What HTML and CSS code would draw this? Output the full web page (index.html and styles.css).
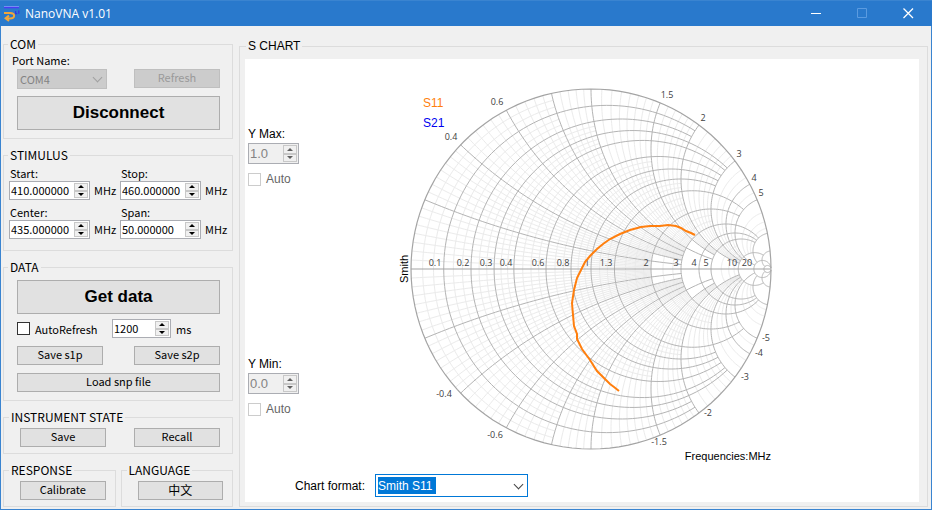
FILE: index.html
```html
<!DOCTYPE html>
<html lang="en">
<head>
  <meta charset="UTF-8" />
  <meta name="viewport" content="width=device-width, initial-scale=1.0"/>
  <title>NanoVNA v1.01</title>
  <link rel="stylesheet" href="styles.css">
</head>
<body>

  <header class="titlebar">
    <svg class="app-icon" width="17" height="16" viewBox="0 0 17 16" fill="none">
      <path d="M0 1.5H15" stroke="#4a3cf0" stroke-width="1.6"/>
      <path d="M0 .5H15" stroke="#8fa0ff" stroke-width=".7"/>
      <path d="M0 7H6C11.500 7 11.500 12.300 6 12.400L2 12.200M5 9.600L1.600 12.300L5 15" stroke="#f0a63c" stroke-width="2"/>
      <path d="M11.600 5V7.600H13.200M14.800 4.600V7.800" stroke="#3a2fe0" stroke-width="1.2"/>
    </svg>
    <h1>NanoVNA v1.01</h1>
    <div class="win-buttons">
      <button type="button" aria-label="Minimize"><svg width="11" height="11" viewBox="0 0 11 11"><path d="M0 5.5H10" stroke="#fff"/></svg></button>
      <button type="button" aria-label="Maximize" disabled><svg width="11" height="11" viewBox="0 0 11 11"><path d="M.5 .5H9.500V9.500H.5Z" fill="none" stroke="#5b9be0"/></svg></button>
      <button type="button" aria-label="Close"><svg width="11" height="11" viewBox="0 0 11 11"><path d="M.5 .5L10 10M10 .5L.5 10" stroke="#fff" stroke-width="1.3"/></svg></button>
    </div>
  </header>

  <main class="window">
    <div class="sidebar">

      <fieldset class="group com">
        <legend>COM</legend>
        <label class="caption" for="port">Port Name:</label>
        <div class="row">
          <div class="combo port"><select id="port" disabled><option>COM4</option></select></div>
          <button class="btn" type="button" disabled>Refresh</button>
        </div>
        <button class="btn btn-big" type="button">Disconnect</button>
      </fieldset>

      <fieldset class="group stimulus">
        <legend>STIMULUS</legend>
        <div class="field">
          <label for="start">Start:</label>
          <div class="value">
            <div class="spinner"><input id="start" type="text" value="410.000000"><span class="arrows"><button type="button" aria-label="Up"></button><button type="button" aria-label="Down"></button></span></div>
            <span class="unit">MHz</span>
          </div>
        </div>
        <div class="field">
          <label for="stop">Stop:</label>
          <div class="value">
            <div class="spinner"><input id="stop" type="text" value="460.000000"><span class="arrows"><button type="button" aria-label="Up"></button><button type="button" aria-label="Down"></button></span></div>
            <span class="unit">MHz</span>
          </div>
        </div>
        <div class="field">
          <label for="center">Center:</label>
          <div class="value">
            <div class="spinner"><input id="center" type="text" value="435.000000"><span class="arrows"><button type="button" aria-label="Up"></button><button type="button" aria-label="Down"></button></span></div>
            <span class="unit">MHz</span>
          </div>
        </div>
        <div class="field">
          <label for="span">Span:</label>
          <div class="value">
            <div class="spinner"><input id="span" type="text" value="50.000000"><span class="arrows"><button type="button" aria-label="Up"></button><button type="button" aria-label="Down"></button></span></div>
            <span class="unit">MHz</span>
          </div>
        </div>
      </fieldset>

      <fieldset class="group data">
        <legend>DATA</legend>
        <button class="btn btn-big" type="button">Get data</button>
        <div class="refresh">
          <label class="check"><input type="checkbox">AutoRefresh</label>
          <div class="spinner"><input id="interval" type="text" value="1200"><span class="arrows"><button type="button" aria-label="Up"></button><button type="button" aria-label="Down"></button></span></div>
          <label for="interval">ms</label>
        </div>
        <div class="row">
          <button class="btn" type="button">Save s1p</button>
          <button class="btn" type="button">Save s2p</button>
        </div>
        <button class="btn" type="button">Load snp file</button>
      </fieldset>

      <fieldset class="group short">
        <legend>INSTRUMENT STATE</legend>
        <div class="row">
          <button class="btn" type="button">Save</button>
          <button class="btn" type="button">Recall</button>
        </div>
      </fieldset>

      <div class="pair">
        <fieldset class="group short">
          <legend>RESPONSE</legend>
          <button class="btn" type="button">Calibrate</button>
        </fieldset>
        <fieldset class="group short">
          <legend>LANGUAGE</legend>
          <button class="btn btn-lang" type="button" lang="zh">中文</button>
        </fieldset>
      </div>
    </div>

    <fieldset class="group chart-group">
      <legend>S CHART</legend>
      <div class="panel">
        <div class="plot-row">
          <div class="limits">
            <div class="limit">
              <label for="ymax">Y Max:</label>
              <div class="spinner"><input id="ymax" type="text" value="1.0" disabled><span class="arrows"><button type="button" aria-label="Up" disabled></button><button type="button" aria-label="Down" disabled></button></span></div>
              <label class="check"><input type="checkbox" disabled>Auto</label>
            </div>
            <div class="limit">
              <label for="ymin">Y Min:</label>
              <div class="spinner"><input id="ymin" type="text" value="0.0" disabled><span class="arrows"><button type="button" aria-label="Up" disabled></button><button type="button" aria-label="Down" disabled></button></span></div>
              <label class="check"><input type="checkbox" disabled>Auto</label>
            </div>
          </div>
          <svg class="smith" width="400" height="400" viewBox="0 0 400 400">
            <g id="grid"></g>
            <g id="ticks"></g>
            <polyline id="trace"/>
            <text class="s11" x="28" y="42">S11</text>
            <text class="s21" x="28" y="62">S21</text>
            <text class="axis" transform="translate(13 204) rotate(-90)" text-anchor="middle">Smith</text>
            <text class="axis" x="376" y="395" text-anchor="end">Frequencies:MHz</text>
          </svg>
        </div>
        <div class="format">
          <label for="format">Chart format:</label>
          <div class="combo format-combo"><select id="format"><option>Smith S11</option></select></div>
        </div>
      </div>
    </fieldset>
  </main>

  <script src="chart.js"></script>
</body>
</html>
```

FILE: styles.css
```css
* {
  box-sizing: border-box;
  margin: 0;
  padding: 0;
}

body {
  min-height: 100vh;
  display: flex;
  flex-direction: column;
  background: #f0f0f0;
  color: #000;
  font: 11px/14px "Noto Sans CJK JP", "Noto Sans CJK SC", sans-serif;
}

button,
input,
select {
  font: inherit;
  color: inherit;
}

.titlebar {
  height: 26px;
  padding-left: 4px;
  display: flex;
  align-items: center;
  background: #2979cc;
  border-top: 1px solid #3a84d0;
  color: #fff;
}

.titlebar h1 {
  flex: 1;
  margin-left: 4px;
  font: 12px/16px "Open Sans", sans-serif;
}

.win-buttons {
  display: flex;
  padding-right: 1px;
}

.win-buttons button {
  width: 46px;
  height: 25px;
  display: flex;
  align-items: center;
  justify-content: center;
  background: none;
  border: none;
}

.window {
  flex: 1;
  display: flex;
  gap: 6px;
  padding: 11px 3px 2px 2px;
  border: 1px solid #3a84d0;
  border-top: none;
}

.sidebar {
  width: 230px;
  display: flex;
  flex-direction: column;
  gap: 9px;
}

/* group boxes */
.group {
  display: flex;
  flex-direction: column;
  min-width: 0;
  border: 1px solid #dcdcdc;
  padding: 0 12px 8px 13px;
}

.group legend {
  margin-left: -9px;
  padding: 0 2px;
  font-size: 12px;
  line-height: 14px;
}

.row {
  display: flex;
  justify-content: space-between;
}

.btn {
  height: 19px;
  padding-bottom: 2px;
  background: #e1e1e1;
  border: 1px solid #adadad;
  line-height: 15px;
}

.row .btn {
  width: 86px;
}

.btn:disabled {
  background: #ccc;
  border-color: #bfbfbf;
  color: #9a9a9a;
}

.btn-big {
  height: 34px;
  padding-bottom: 0;
  font: bold 17px/20px "Liberation Sans", Arial, sans-serif;
}

.btn-lang {
  font-size: 12px;
}

.caption {
  margin: 2px 0 2px -5px;
}

.com .row {
  margin-bottom: 7px;
}

/* drop-downs */
.combo {
  position: relative;
}

.combo select {
  width: 100%;
  height: 100%;
  padding: 0 2px;
  appearance: none;
  border: 1px solid #bfbfbf;
  border-radius: 0;
  background: #ccc;
  color: #838383;
  opacity: 1;
}

.combo::after {
  content: "";
  position: absolute;
  right: 6px;
  top: 50%;
  width: 6px;
  height: 6px;
  margin-top: -5px;
  border: solid #a0a0a0;
  border-width: 0 1px 1px 0;
  transform: rotate(45deg);
  pointer-events: none;
}

.port {
  width: 90px;
  height: 20px;
}

/* number boxes */
.spinner {
  display: flex;
  height: 19px;
  padding: 1px;
  background: #fff;
  border: 1px solid #abadb3;
}

.spinner input {
  flex: 1;
  width: 0;
  min-width: 0;
  border: none;
  background: none;
  padding-bottom: 2px;
  line-height: 14px;
}

.arrows {
  width: 14px;
  display: flex;
  flex-direction: column;
}

.arrows button {
  flex: 1;
  display: flex;
  align-items: center;
  justify-content: center;
  border: 1px solid #c8c8c8;
  background: #f0f0f0;
}

.arrows button::before {
  content: "";
  border: solid transparent;
  border-width: 0 3px 3px;
  border-bottom-color: #000;
}

.arrows button:last-child::before {
  border-width: 3px 3px 0;
  border-top-color: #000;
}

.stimulus {
  display: grid;
  grid-template-columns: 1fr 1fr;
  gap: 4px 0;
  padding: 3px 1px 11px 5px;
}

.stimulus legend {
  margin-left: -1px;
}

.field label {
  display: block;
  padding-left: 1px;
  line-height: 16px;
}

.value {
  display: flex;
  gap: 4px;
}

.value .spinner {
  width: 81px;
}

.unit {
  line-height: 19px;
}

/* check boxes */
.check {
  display: flex;
  align-items: center;
  gap: 5px;
}

.check input {
  appearance: none;
  width: 13px;
  height: 13px;
  border: 1px solid #333;
  background: #fff;
}

.check input:disabled {
  border-color: #ccc;
}

.data {
  padding-top: 6px;
}

.refresh {
  display: grid;
  grid-template-columns: 90px 59px auto;
  align-items: center;
  gap: 5px;
  margin: 5px 0 8px;
}

.data .row {
  margin-bottom: 8px;
}

.short {
  padding: 4px 12px 6px 16px;
}

.short legend {
  margin-left: -11px;
}

.pair {
  display: grid;
  grid-template-columns: 1fr 1fr;
  gap: 5px;
}

.pair .group {
  padding-right: 9px;
}

/* chart */
.chart-group {
  flex: 1;
  margin-top: 2px;
  padding: 6px 8px 4px 5px;
  font: 12px/14px "Liberation Sans", Arial, sans-serif;
}

.chart-group legend {
  margin-left: 1px;
}

.panel {
  flex: 1;
  padding: 6px 3px 4px;
  background: #fff;
}

.plot-row {
  display: grid;
  grid-template-columns: 147px 1fr;
}

.limits {
  display: flex;
  flex-direction: column;
  gap: 170px;
  padding-top: 62px;
}

.limit {
  height: 60px;
}

.limit > label {
  display: block;
}

.limit .spinner {
  width: 51px;
  height: 21px;
  margin: 2px 0 8px;
  background: #f0f0f0;
}

.limit .spinner input {
  padding-bottom: 0;
  font-size: 13px;
  color: #838383;
}

.limit .arrows button::before {
  border-bottom-color: #606060;
}

.limit .arrows button:last-child::before {
  border-bottom-color: transparent;
  border-top-color: #606060;
}

.limit .check {
  display: flex;
  color: #666;
}

.format {
  display: flex;
  align-items: center;
  gap: 10px;
  margin: 9px 0 0 47px;
}

.format-combo {
  width: 153px;
  height: 23px;
}

.format-combo select {
  border-color: #0078d7;
  background: #fff linear-gradient(#0078d7, #0078d7) 2px 2px / 58px 17px no-repeat;
  color: #fff;
}

.format-combo option {
  color: #000;
}

.format-combo::after {
  border-color: #444;
}

.smith text {
  font-size: 12px;
}

.smith .axis {
  font-size: 11px;
}

.smith .s11 {
  fill: #ff7f0e;
}

.smith .s21 {
  fill: #0000f0;
}

.smith .tick {
  font: 9px "Open Sans", sans-serif;
  fill: #404040;
  text-anchor: middle;
}

.smith .minor {
  fill: none;
  stroke: #ebebeb;
}

.smith .major {
  fill: none;
  stroke: #b4b4b4;
}

.smith .rim {
  fill: none;
  stroke: #a4a4a4;
  stroke-width: 1.2;
}

#trace {
  fill: none;
  stroke: #ff7f0e;
  stroke-width: 2;
}
```

FILE: chart.js
```javascript
const CX = 196, CY = 204, R = 180;
const grid = document.getElementById("grid");

// normalised impedance -> position in the chart
function point(r, x) {
  const d = (r + 1) * (r + 1) + x * x;
  const re = (r * r - 1 + x * x) / d;
  const im = 2 * x / d;
  return (CX + R * re).toFixed(2) + "," + (CY - R * im).toFixed(2);
}

function line(points, cls) {
  const el = document.createElementNS("http://www.w3.org/2000/svg", "polyline");
  el.setAttribute("points", points.join(" "));
  el.setAttribute("class", cls);
  grid.appendChild(el);
}

// circle of constant resistance, drawn between -limit and +limit
function resistance(r, limit, cls) {
  const end = Math.atan(limit / (r + 1));
  const pts = [];
  for (let i = -60; i <= 60; i++) pts.push(point(r, (r + 1) * Math.tan(end * i / 60)));
  line(pts, cls);
}

// arcs of constant reactance above and below the axis
function reactance(x, limit, cls) {
  [x, -x].forEach(v => {
    const a = Math.atan(1 / x), b = Math.atan((limit + 1) / x);
    const pts = [];
    for (let i = 0; i <= 60; i++) pts.push(point(x * Math.tan(a + (b - a) * i / 60) - 1, v));
    line(pts, cls);
  });
}

function between(from, to, parts, draw) {
  for (let i = 1; i < parts; i++) draw(from + (to - from) * i / parts);
}

// [from, to, parts, limit]
[
  [0, .1, 3, .8], [.1, .2, 3, .8], [.2, .3, 3, 1], [.3, .4, 3, 1],
  [.4, .6, 4, 1], [.6, .8, 3, 1.5], [.8, 1, 3, 1.5], [1, 1.3, 3, 2],
  [1.3, 2, 4, 2], [2, 3, 3, 3], [5, 10, 4, 5]
].forEach(([a, b, n, lim]) => between(a, b, n, r => resistance(r, lim, "minor")));

[
  [0, .2, 8, 2], [.2, .4, 8, 2], [.4, .6, 6, 3], [.6, .8, 5, 3],
  [.8, 1, 5, 3], [1, 1.5, 8, 3], [1.5, 2, 6, 5], [2, 3, 6, 10],
  [3, 4, 3, 10], [4, 5, 2, 10], [5, 10, 4, 10]
].forEach(([a, b, n, lim]) => between(a, b, n, x => reactance(x, lim, "minor")));

[
  [.1, 2], [.2, 2], [.3, 3], [.4, 3], [.6, 3], [.8, 3], [1, 3], [1.3, 5],
  [2, 5], [3, 10], [4, 10], [5, 10], [10, 20], [20, 400], [50, 900]
].forEach(([r, lim]) => resistance(r, lim, "major"));

[
  [.2, 3], [.4, 3], [.6, 3], [.8, 3], [1, 5], [1.5, 5], [2, 10],
  [3, 10], [4, 10], [5, 20], [10, 20], [20, 50]
].forEach(([x, lim]) => reactance(x, lim, "major"));

line([CX - R + "," + CY, CX + R + "," + CY], "rim");
resistance(0, 900, "rim");

// tick labels
[
  ["0.1", 40, 201], ["0.2", 68, 201], ["0.3", 91, 201], ["0.4", 111, 201],
  ["0.6", 143, 201], ["0.8", 168, 201], ["1", 192, 201], ["1.3", 211, 201],
  ["2", 251, 201], ["3", 281, 201], ["4", 299, 201], ["5", 311, 201],
  ["10", 337, 201], ["20", 352, 201],
  ["0.4", 56, 75], ["0.6", 102, 40], ["1.5", 272, 33], ["2", 308, 56],
  ["3", 344, 92], ["4", 359, 116], ["5", 366, 131],
  ["-0.4", 49, 332], ["-0.6", 100, 373], ["-1.5", 264, 380], ["-2", 313, 351],
  ["-3", 350, 315], ["-4", 364, 291], ["-5", 371, 276]
].forEach(([label, x, y]) => {
  const el = document.createElementNS("http://www.w3.org/2000/svg", "text");
  el.setAttribute("class", "tick");
  el.setAttribute("x", x);
  el.setAttribute("y", y);
  el.textContent = label;
  document.getElementById("ticks").appendChild(el);
});

// measured S11
const s11 = [
  [300, 170], [296, 168], [291, 166], [286, 163], [281, 161], [273, 160],
  [265, 161], [255, 161], [246, 162], [235, 165], [225, 169], [215, 174],
  [208, 179], [202, 184], [195, 191], [190, 197], [187, 203], [182, 213],
  [179, 225], [177, 238], [178, 250], [179, 261], [182, 269], [182, 274],
  [187, 284], [195, 295], [202, 306], [210, 314], [215, 319], [219, 322],
  [224, 326]
];
document.getElementById("trace").setAttribute("points", s11.join(" "));
```
